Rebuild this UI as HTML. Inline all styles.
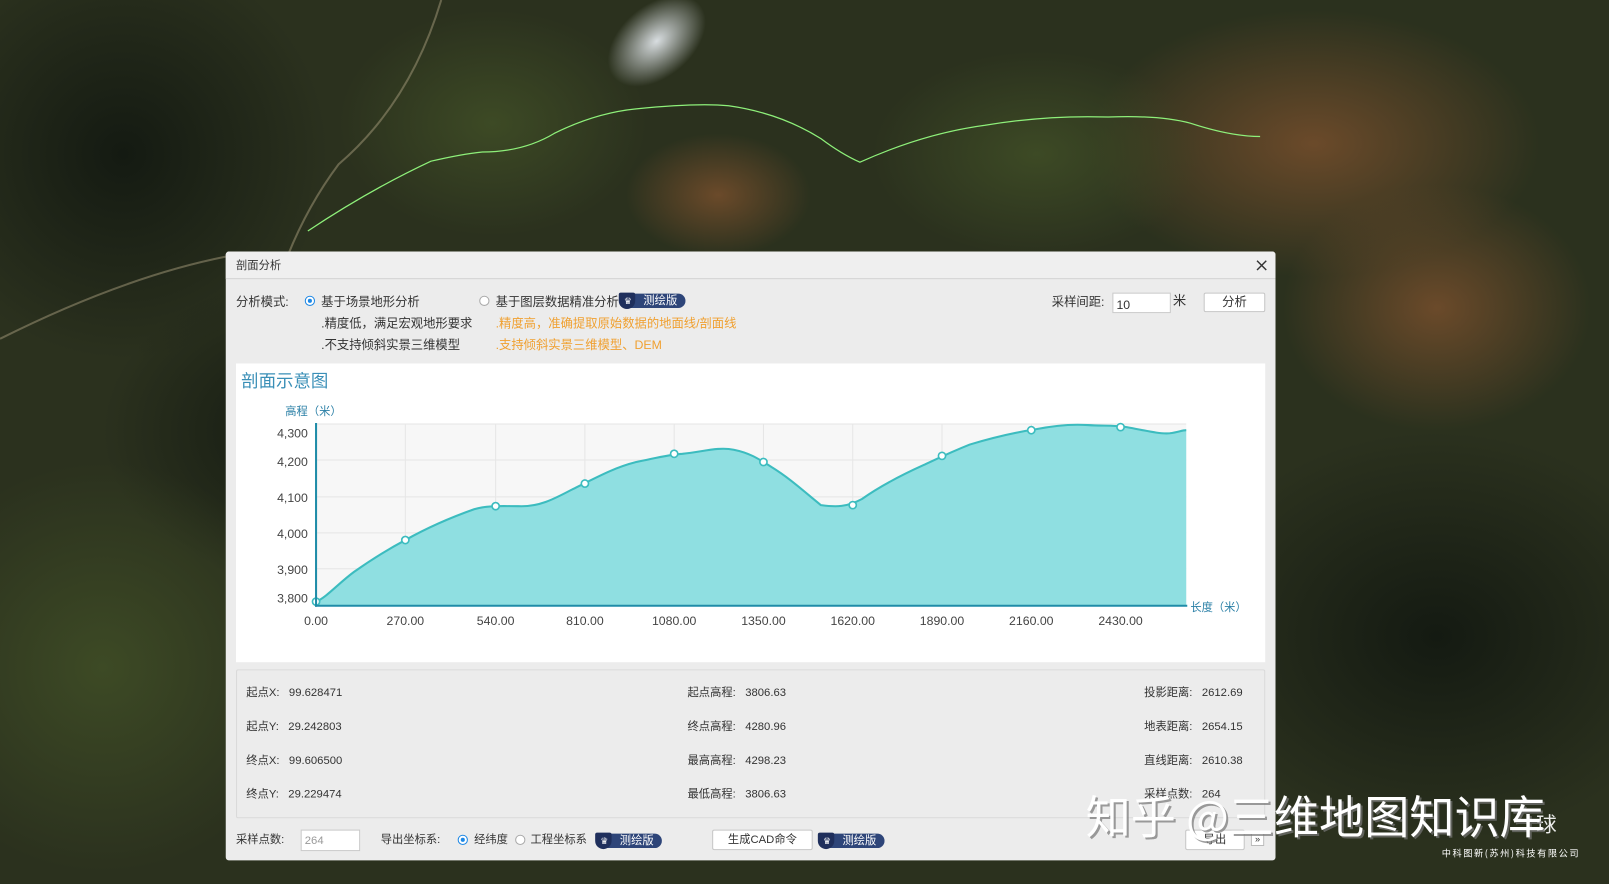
<!DOCTYPE html>
<html><head><meta charset="utf-8">
<style>
*{margin:0;padding:0;box-sizing:border-box}
html,body{width:1609px;height:884px;overflow:hidden;background:#2a2e1e}
#w{position:absolute;left:0;top:0;width:1568px;height:861px;transform:scale(1.02615,1.0267);transform-origin:0 0;font-family:"Liberation Sans","Noto Sans CJK SC",sans-serif;font-size:12px;color:#333;overflow:hidden}
.a{position:absolute;white-space:nowrap;line-height:1}
.dlg{position:absolute;left:220px;top:245px;width:1023px;height:593px;background:#ececec;border-radius:3px}
.radio{position:absolute;width:10px;height:10px;border-radius:50%;border:1px solid #aaa;background:#fff}
.radio.on{border-color:#1e88e5}
.radio.on::after{content:"";position:absolute;left:2px;top:2px;width:4px;height:4px;border-radius:50%;background:#1e88e5}
.badge{position:absolute;height:14px;background:#2e4579;border-radius:7px;color:#fff;font-size:11px;line-height:14px;padding-left:22px}
.badge::before{content:"";position:absolute;left:-2px;top:-1px;width:16px;height:16px;background:#1f2f5c;border-radius:2px 2px 8px 8px}
.badge i{position:absolute;left:3px;top:0;font-style:normal;font-size:9px;color:#fff}
.inp{position:absolute;background:#fff;border:1px solid #c9c9c9}
.btn{position:absolute;background:#fff;border:1px solid #c6c6c6;border-radius:2px;text-align:center}
.or{color:#f0a030}
</style></head><body>
<div id="w">
<svg class="a" style="left:0;top:0" width="1568" height="861">
<defs>
<radialGradient id="g1" cx="0.5" cy="0.5" r="0.5"><stop offset="0" stop-color="#6b4a2a"/><stop offset="1" stop-color="#6b4a2a" stop-opacity="0"/></radialGradient>
<radialGradient id="g2" cx="0.5" cy="0.5" r="0.5"><stop offset="0" stop-color="#3d4a25"/><stop offset="1" stop-color="#3d4a25" stop-opacity="0"/></radialGradient>
<radialGradient id="g3" cx="0.5" cy="0.5" r="0.5"><stop offset="0" stop-color="#141a12"/><stop offset="1" stop-color="#141a12" stop-opacity="0"/></radialGradient>
<radialGradient id="g4" cx="0.5" cy="0.5" r="0.5"><stop offset="0" stop-color="#d8dde0"/><stop offset="1" stop-color="#d8dde0" stop-opacity="0"/></radialGradient>
</defs>
<rect width="1568" height="861" fill="#2b311e"/>
<ellipse cx="120" cy="150" rx="200" ry="200" fill="url(#g3)"/>
<ellipse cx="1280" cy="140" rx="220" ry="130" fill="url(#g1)"/>
<ellipse cx="1400" cy="300" rx="150" ry="120" fill="url(#g1)"/>
<ellipse cx="700" cy="190" rx="90" ry="60" fill="url(#g1)"/>
<ellipse cx="1010" cy="150" rx="160" ry="100" fill="url(#g2)"/>
<ellipse cx="480" cy="120" rx="150" ry="110" fill="url(#g2)"/>
<ellipse cx="300" cy="420" rx="200" ry="150" fill="url(#g3)"/>
<ellipse cx="1400" cy="620" rx="250" ry="200" fill="url(#g3)"/>
<ellipse cx="100" cy="650" rx="200" ry="200" fill="url(#g2)"/>
<ellipse cx="640" cy="40" rx="55" ry="35" fill="url(#g4)" transform="rotate(-40 640 40)"/>
<path d="M430,0 Q400,100 330,160 Q300,200 280,250 M0,330 Q120,270 220,250" stroke="#a69c7c" stroke-width="2" fill="none" opacity="0.5"/>
<path d="M300,225 Q360,185 420,157 Q450,150 470,148 Q510,148 540,130 Q580,110 620,106 Q680,100 710,103 Q760,110 800,135 Q820,150 838,158 Q900,130 960,122 Q1020,112 1080,114 Q1130,112 1160,120 Q1200,133 1228,133" stroke="#8ef07a" stroke-width="1.2" fill="none"/>
</svg>

<div class="dlg">
 <div class="a" style="left:0;top:0;width:1023px;height:27px;background:#efefef;border-bottom:1px solid #c9c9c9;border-radius:3px 3px 0 0"></div>
 <div class="a" style="left:10px;top:9px;font-size:11px">剖面分析</div>
 <svg class="a" style="left:1004px;top:8px" width="11" height="11"><path d="M1,1 L10,10 M10,1 L1,10" stroke="#333" stroke-width="1.4"/></svg>

 <div class="a" style="left:10px;top:43px">分析模式:</div>
 <div class="radio on" style="left:77px;top:43px"></div>
 <div class="a" style="left:93px;top:43px">基于场景地形分析</div>
 <div class="a" style="left:93px;top:64px">.精度低，满足宏观地形要求</div>
 <div class="a" style="left:93px;top:85px">.不支持倾斜实景三维模型</div>
 <div class="radio" style="left:247px;top:43px"></div>
 <div class="a" style="left:263px;top:43px">基于图层数据精准分析</div>
 <div class="badge" style="left:385px;top:41px;width:63px"><i>♛</i>测绘版</div>
 <div class="a or" style="left:263px;top:64px">.精度高，准确提取原始数据的地面线/剖面线</div>
 <div class="a or" style="left:263px;top:85px">.支持倾斜实景三维模型、DEM</div>

 <div class="a" style="left:805px;top:43px">采样间距:</div>
 <div class="inp" style="left:864px;top:40px;width:57px;height:20px"><span class="a" style="left:3px;top:5px">10</span></div>
 <div class="a" style="left:923px;top:41px;font-size:13px">米</div>
 <div class="btn" style="left:953px;top:40px;width:60px;height:19px;line-height:17px">分析</div>

 <div class="a" style="left:10px;top:109px;width:1003px;height:291px;background:#fff"></div>
 <div class="a" style="left:15px;top:118px;font-size:17px;color:#3a8fb7">剖面示意图</div>
 <div class="a" style="left:58px;top:151px;font-size:11px;color:#2a7fa6">高程（米）</div>

 <div class="a" style="left:10px;top:407px;width:1003px;height:145px;border:1px solid #dadada;border-radius:2px"></div>
 <div class="a" style="left:20px;top:425px;font-size:11px">起点X:&nbsp;&nbsp;&nbsp;99.628471</div>
 <div class="a" style="left:20px;top:458px;font-size:11px">起点Y:&nbsp;&nbsp;&nbsp;29.242803</div>
 <div class="a" style="left:20px;top:491px;font-size:11px">终点X:&nbsp;&nbsp;&nbsp;99.606500</div>
 <div class="a" style="left:20px;top:524px;font-size:11px">终点Y:&nbsp;&nbsp;&nbsp;29.229474</div>
 <div class="a" style="left:450px;top:425px;font-size:11px">起点高程:&nbsp;&nbsp;&nbsp;3806.63</div>
 <div class="a" style="left:450px;top:458px;font-size:11px">终点高程:&nbsp;&nbsp;&nbsp;4280.96</div>
 <div class="a" style="left:450px;top:491px;font-size:11px">最高高程:&nbsp;&nbsp;&nbsp;4298.23</div>
 <div class="a" style="left:450px;top:524px;font-size:11px">最低高程:&nbsp;&nbsp;&nbsp;3806.63</div>
 <div class="a" style="left:895px;top:425px;font-size:11px">投影距离:&nbsp;&nbsp;&nbsp;2612.69</div>
 <div class="a" style="left:895px;top:458px;font-size:11px">地表距离:&nbsp;&nbsp;&nbsp;2654.15</div>
 <div class="a" style="left:895px;top:491px;font-size:11px">直线距离:&nbsp;&nbsp;&nbsp;2610.38</div>
 <div class="a" style="left:895px;top:524px;font-size:11px">采样点数:&nbsp;&nbsp;&nbsp;264</div>

 <div class="a" style="left:10px;top:568px;font-size:11px">采样点数:</div>
 <div class="inp" style="left:73px;top:563px;width:58px;height:21px"><span class="a" style="left:3px;top:5px;color:#999;font-size:11px">264</span></div>
 <div class="a" style="left:151px;top:568px;font-size:11px">导出坐标系:</div>
 <div class="radio on" style="left:226px;top:568px"></div>
 <div class="a" style="left:242px;top:568px;font-size:11px">经纬度</div>
 <div class="radio" style="left:282px;top:568px"></div>
 <div class="a" style="left:297px;top:568px;font-size:11px">工程坐标系</div>
 <div class="badge" style="left:362px;top:567px;width:63px"><i>♛</i>测绘版</div>
 <div class="btn" style="left:474px;top:563px;width:98px;height:20px;line-height:18px;font-size:11px">生成CAD命令</div>
 <div class="badge" style="left:579px;top:567px;width:63px"><i>♛</i>测绘版</div>
 <div class="btn" style="left:935px;top:563px;width:58px;height:20px;line-height:18px;font-size:11px">导出</div>
 <div class="a" style="left:999px;top:566px;width:13px;height:13px;border:1px solid #bbb;background:#fff;font-size:9px;text-align:center;line-height:11px">»</div>
</div>

<svg class="a" style="left:0;top:0" width="1568" height="861">
<rect x="308" y="413" width="848" height="177" fill="#f7f7f7"/>
<g stroke="#e6e6e6" stroke-width="1">
<line x1="308" y1="448" x2="1156" y2="448"/><line x1="308" y1="484" x2="1156" y2="484"/><line x1="308" y1="519" x2="1156" y2="519"/><line x1="308" y1="554" x2="1156" y2="554"/><line x1="308" y1="413" x2="1156" y2="413"/>
<line x1="395" y1="413" x2="395" y2="590"/><line x1="483" y1="413" x2="483" y2="590"/><line x1="570" y1="413" x2="570" y2="590"/><line x1="657" y1="413" x2="657" y2="590"/><line x1="744" y1="413" x2="744" y2="590"/><line x1="831" y1="413" x2="831" y2="590"/><line x1="918" y1="413" x2="918" y2="590"/><line x1="1005" y1="413" x2="1005" y2="590"/><line x1="1092" y1="413" x2="1092" y2="590"/>
</g>
<path id="c" d="M308,586 C318,582 330,568 345,557 C365,543 380,534 395,526 C420,512 445,502 462,496 C475,492 490,493 505,493 C525,494 540,486 557,477 C585,463 600,455 620,450 C640,446 650,443 665,442 C685,440 700,435 715,438 C730,441 738,446 752,455 C770,466 785,480 800,492 C815,494 825,494 840,486 C860,472 880,462 900,453 C915,446 925,441 945,433 C965,427 990,421 1010,418 C1030,414 1045,413 1060,414 C1075,415 1085,414 1098,416 C1115,419 1130,423 1140,422 C1148,421 1152,419 1156,419" fill="none"/>
<path d="M308,586 C318,582 330,568 345,557 C365,543 380,534 395,526 C420,512 445,502 462,496 C475,492 490,493 505,493 C525,494 540,486 557,477 C585,463 600,455 620,450 C640,446 650,443 665,442 C685,440 700,435 715,438 C730,441 738,446 752,455 C770,466 785,480 800,492 C815,494 825,494 840,486 C860,472 880,462 900,453 C915,446 925,441 945,433 C965,427 990,421 1010,418 C1030,414 1045,413 1060,414 C1075,415 1085,414 1098,416 C1115,419 1130,423 1140,422 C1148,421 1152,419 1156,419 L1156,590 L308,590 Z" fill="#8fdfe1"/>
<use href="#c" stroke="#3cbcbf" stroke-width="2"/>
<g fill="#fff" stroke="#3cbcbf" stroke-width="1.6">
<circle cx="308" cy="586" r="3.5"/><circle cx="395" cy="526" r="3.5"/><circle cx="483" cy="493" r="3.5"/><circle cx="570" cy="471" r="3.5"/><circle cx="657" cy="442" r="3.5"/><circle cx="744" cy="450" r="3.5"/><circle cx="831" cy="492" r="3.5"/><circle cx="918" cy="444" r="3.5"/><circle cx="1005" cy="419" r="3.5"/><circle cx="1092" cy="416" r="3.5"/>
</g>
<line x1="308" y1="412" x2="308" y2="591" stroke="#1f8ca8" stroke-width="2"/>
<line x1="307" y1="590" x2="1157" y2="590" stroke="#1f8ca8" stroke-width="2"/>
<g font-size="12" fill="#444" font-family="Liberation Sans,sans-serif" text-anchor="end">
<text x="300" y="426">4,300</text><text x="300" y="454">4,200</text><text x="300" y="489">4,100</text><text x="300" y="524">4,000</text><text x="300" y="559">3,900</text><text x="300" y="587">3,800</text>
</g>
<g font-size="12" fill="#444" font-family="Liberation Sans,sans-serif" text-anchor="middle">
<text x="308" y="609">0.00</text><text x="395" y="609">270.00</text><text x="483" y="609">540.00</text><text x="570" y="609">810.00</text><text x="657" y="609">1080.00</text><text x="744" y="609">1350.00</text><text x="831" y="609">1620.00</text><text x="918" y="609">1890.00</text><text x="1005" y="609">2160.00</text><text x="1092" y="609">2430.00</text>
</g>
<text x="1160" y="595" font-size="11" fill="#2a7fa6" font-family="Noto Sans CJK SC,sans-serif">长度（米）</text>
<text x="1497" y="810" font-size="20" fill="#fff" opacity="0.9" font-family="Noto Sans CJK SC,sans-serif">球</text>
<text x="1405" y="834" font-size="9" fill="#fff" letter-spacing="1.5" font-family="Noto Sans CJK SC,sans-serif">中科图新(苏州)科技有限公司</text>
<text x="1060" y="814" font-size="44" fill="#777" opacity="0.7" font-family="Noto Sans CJK SC,sans-serif">知乎 @三维地图知识库</text>
<text x="1058" y="812" font-size="44" fill="#ffffff" font-family="Noto Sans CJK SC,sans-serif">知乎 @三维地图知识库</text>
</svg>
</div>
</body></html>
